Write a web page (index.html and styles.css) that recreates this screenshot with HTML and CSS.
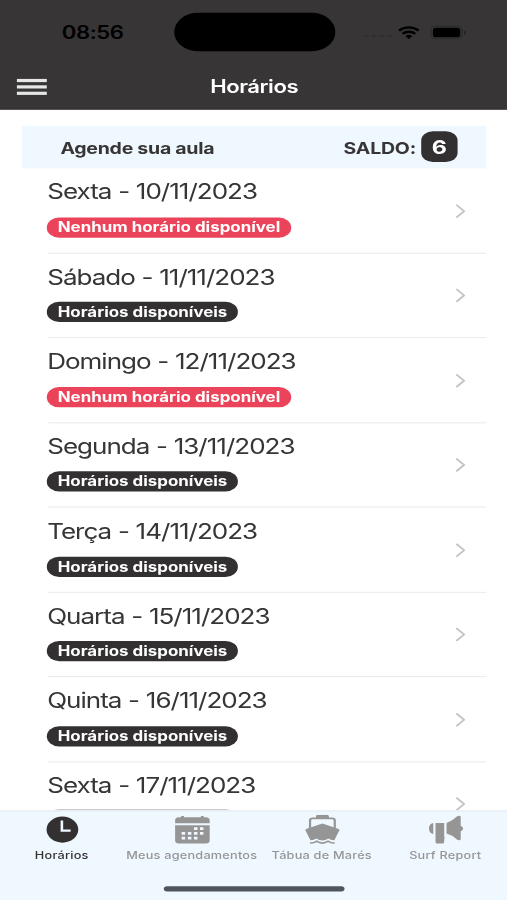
FILE: index.html
```html
<!DOCTYPE html>
<html lang="pt-BR">
<head>
<meta charset="utf-8">
<title>Horários</title>
<link rel="stylesheet" href="styles.css">
</head>
<body>
<div class="app">
  <header class="header">
    <div class="status">
      <span class="time">08:56</span>
      <span class="island"></span>
      <div class="indicators">
        <span class="signal"><i></i><i></i><i></i><i></i></span>
        <svg class="wifi" viewBox="0 0 17 13"><g fill="none" stroke="#000" stroke-width="2.2"><path d="M1 4.7a10.8 10.8 0 0 1 15 0"/><path d="M3.7 7.7a7 7 0 0 1 9.6 0"/></g><path d="M8.500 12.600 5.900 9.900a3.800 3.800 0 0 1 5.200 0z"/></svg>
        <svg class="battery" viewBox="0 0 28 13"><rect x=".5" y=".5" width="24" height="12" rx="3.8" fill="none" stroke="#2b2a2b"/><rect x="2" y="2" width="21" height="9" rx="2.5"/><path d="M26 4.500v4c1-.3 1.500-1.100 1.500-2s-.5-1.700-1.500-2" fill="#242324"/></svg>
      </div>
    </div>
    <div class="navbar">
      <span class="menu"><i></i><i></i><i></i></span>
      <h1 class="nav-title">Horários</h1>
    </div>
  </header>
  <main class="content">
    <div class="summary">
      <span class="summary-label">Agende sua aula</span>
      <span class="balance">SALDO:</span>
      <span class="count">6</span>
    </div>
    <ul class="list">
      <li class="row"><div><p class="day">Sexta - 10/11/2023</p><span class="pill full">Nenhum horário disponível</span></div><svg class="chevron" viewBox="0 0 8 14"><path d="M1 1l6 6-6 6"/></svg></li>
      <li class="row"><div><p class="day">Sábado - 11/11/2023</p><span class="pill">Horários disponíveis</span></div><svg class="chevron" viewBox="0 0 8 14"><path d="M1 1l6 6-6 6"/></svg></li>
      <li class="row"><div><p class="day">Domingo - 12/11/2023</p><span class="pill full">Nenhum horário disponível</span></div><svg class="chevron" viewBox="0 0 8 14"><path d="M1 1l6 6-6 6"/></svg></li>
      <li class="row"><div><p class="day">Segunda - 13/11/2023</p><span class="pill">Horários disponíveis</span></div><svg class="chevron" viewBox="0 0 8 14"><path d="M1 1l6 6-6 6"/></svg></li>
      <li class="row"><div><p class="day">Terça - 14/11/2023</p><span class="pill">Horários disponíveis</span></div><svg class="chevron" viewBox="0 0 8 14"><path d="M1 1l6 6-6 6"/></svg></li>
      <li class="row"><div><p class="day">Quarta - 15/11/2023</p><span class="pill">Horários disponíveis</span></div><svg class="chevron" viewBox="0 0 8 14"><path d="M1 1l6 6-6 6"/></svg></li>
      <li class="row"><div><p class="day">Quinta - 16/11/2023</p><span class="pill">Horários disponíveis</span></div><svg class="chevron" viewBox="0 0 8 14"><path d="M1 1l6 6-6 6"/></svg></li>
      <li class="row"><div><p class="day">Sexta - 17/11/2023</p><span class="pill peek"></span></div><svg class="chevron" viewBox="0 0 8 14"><path d="M1 1l6 6-6 6"/></svg></li>
    </ul>
  </main>
  <nav class="tabs">
    <a class="tab active">
      <svg class="icon" viewBox="0 0 28 28"><circle cx="14" cy="14" r="12.200"/><path d="M13.600 5.500v9.500h6.700" fill="none" stroke="#f0f8ff" stroke-width="2"/></svg>
      <span>Horários</span>
    </a>
    <a class="tab wide">
      <svg class="icon" viewBox="0 0 28 28"><path d="M.7 8V5.500A3 3 0 0 1 3.700 2.500H5.300V1.200h2.200v1.300h13V1.200h2.200v1.300h1.600a3 3 0 0 1 3 3V8zM.7 9.800h26.600V24a3 3 0 0 1-3 3H3.700a3 3 0 0 1-3-3z"/><path d="M15.200 11.800h2.700v2.500h-2.700zM19.800 11.800h2.700v2.500h-2.700zM5.700 16.300h2.700v2.500H5.700zM10.500 16.300h2.700v2.500h-2.700zM15.200 16.300h2.700v2.500h-2.700zM19.800 16.300h2.700v2.500h-2.700zM5.700 20.800h2.700v2.500H5.700zM10.500 20.800h2.700v2.500h-2.700zM15.200 20.800h2.700v2.500h-2.700z" fill="#f0f8ff"/></svg>
      <span>Meus agendamentos</span>
    </a>
    <a class="tab">
      <svg class="icon" viewBox="0 0 28 28"><path d="M4.500 13V5.500a2 2 0 0 1 2-2h15a2 2 0 0 1 2 2V13" fill="none" stroke="currentColor" stroke-width="1.700"/><path d="M9 3.500V1.500a1.500 1.500 0 0 1 1.500-1.500h7a1.500 1.500 0 0 1 1.500 1.500V3.500zM14 8.200l12 5q1.400.5 1 1.700l-3.800 9q-2.400.2-4.600-1.500-4.600 3.500-9.200 0-2.200 1.700-4.600 1.500L1 14.900q-.4-1.200 1-1.700z"/><path d="M4.500 26.500q3 .2 5-1.600 4.500 3.600 9 0 2 1.800 5 1.600" fill="none" stroke="currentColor" stroke-width="1.500"/></svg>
      <span>Tábua de Marés</span>
    </a>
    <a class="tab">
      <svg class="icon" viewBox="0 0 28 28"><path d="M4.300 8v10C2 18 1 15.500 1 13s1-5 3.300-5zM6 7.700h6.700V21q.8.600 0 1.500V25.500a1.500 1.500 0 0 1-1.500 1.500H7.500A1.500 1.500 0 0 1 6 25.500zM14.500 7.700Q19 6 22 2.200q1-1.200 2.200-1.200 1.200 0 1.200 1.200v8.300c2.400.8 2.400 4.200 0 5V22.800q0 1.200-1.200 1.200T22 22.800q-3-3.500-7.500-5.100z"/></svg>
      <span>Surf Report</span>
    </a>
    <i class="home-indicator"></i>
  </nav>
</div>
</body>
</html>
```
FILE: styles.css
```css
* { box-sizing: border-box; margin: 0; padding: 0; }

html, body { width: 507px; height: 900px; overflow: hidden; background: #fff; }

/* The phone canvas is 390 x 844 and is stretched to fill the window. */
.app {
  width: 390px;
  height: 844px;
  display: flex;
  flex-direction: column;
  transform: scale(1.3, 1.06635);
  transform-origin: 0 0;
  font-family: Inter, "Liberation Sans", sans-serif;
  color: #373536;
}

.header { height: 102.500px; flex: none; background: #373536; }
.status { height: 60px; display: grid; grid-template-columns: 133.500px 124px 1fr; align-items: center; }
.time { padding: 1px 0 0 47.500px; font-size: 17px; font-weight: 600; letter-spacing: -.3px; color: #000; }
.island { height: 36px; border-radius: 18px; background: #000; }
.indicators { display: flex; align-items: center; padding-left: 21.500px; color: #000; }
.signal { display: flex; gap: 2px; width: 27px; padding: 7px 0 0 1px; }
.signal i { width: 4px; height: 2px; border-radius: 1px; background: #302e2f; }
.wifi { width: 17px; height: 13px; }
.battery { width: 28px; height: 13px; margin-left: 7.500px; }

.navbar { height: 42px; display: grid; grid-template-columns: 60px 1fr 60px; align-items: center; }
.menu { display: flex; flex-direction: column; gap: 3.800px; padding: 1px 0 0 13.200px; }
.menu i { width: 23px; height: 2.400px; background: #e6e6e6; }
.nav-title { padding-left: 1px; font-size: 17px; font-weight: 600; text-align: center; color: #fff; letter-spacing: -.35px; }

.content { flex: 1; min-height: 0; overflow: hidden; padding: 15.700px 16px 0 17px; }
.summary { height: 39.600px; display: flex; align-items: center; padding: 0 22px 0 29.500px; background: #f0f8ff; }
.summary-label { flex: 1; padding-top: 2px; font-size: 15px; font-weight: 700; letter-spacing: -.2px; }
.balance { padding-top: 2px; font-size: 15px; font-weight: 700; letter-spacing: -.15px; }
.count { width: 28px; height: 29px; margin-left: 4px; border-radius: 9px; background: #323031; color: #fff; font-size: 18px; font-weight: 700; line-height: 29px; text-align: center; }

.list { list-style: none; padding: .7px 0 0 19.700px; }
.row { height: 79.500px; display: flex; align-items: center; justify-content: space-between; padding-right: 16px; border-bottom: 1px solid #ebebeb; }
.day { height: 24px; margin: -3.500px 0 0 -.4px; line-height: 23px; font-size: 20px; letter-spacing: -.76px; word-spacing: .3px; white-space: nowrap; }
.pill { display: block; width: max-content; height: 19.200px; margin: 10.500px 0 0 -.3px; padding: 0 8px; border-radius: 10px; background: #323031; color: #fff; font-size: 13px; font-weight: 700; line-height: 18.800px; }
.pill.full { background: #eb445a; }
.pill.peek { width: 147px; margin-top: 9.500px; margin-bottom: 1px; background: #b9bcbf; }
.chevron { width: 8px; height: 14px; fill: none; stroke: #c4c4c4; stroke-width: 1.600; }

.tabs { position: relative; height: 84px; flex: none; display: flex; background: #f0f8ff; border-top: .5px solid #e4ebf1; }
.tab { width: 95px; height: 50px; display: flex; flex-direction: column; align-items: center; padding-top: 3.400px; color: #959595; font-size: 9.800px; font-weight: 500; letter-spacing: .16px; line-height: 14px; white-space: nowrap; }
.tab.wide { width: 105px; }
.tab.active { color: #323031; }
.icon { width: 28px; height: 28px; margin-bottom: 3.300px; fill: currentColor; }
.home-indicator { position: absolute; left: 126px; top: 70px; width: 138.500px; height: 5px; border-radius: 3px; background: #4f555b; }
```
